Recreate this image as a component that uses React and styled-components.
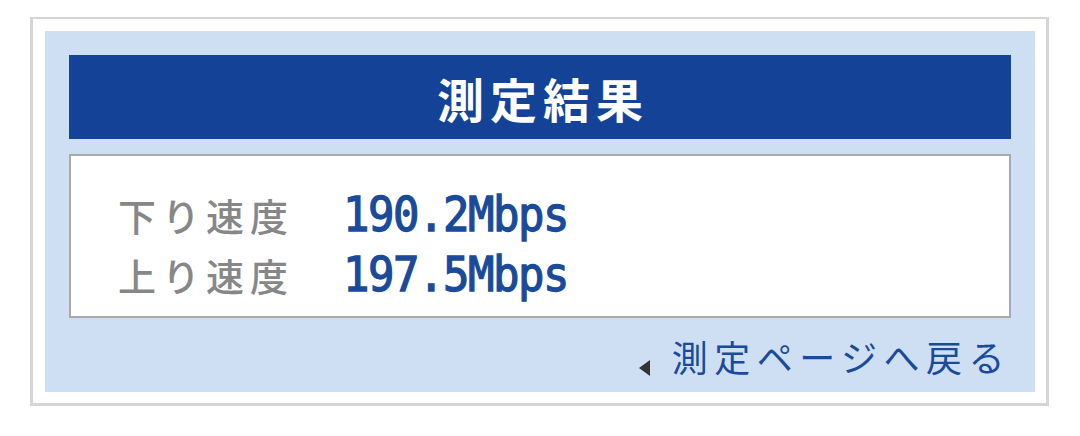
import React from "react";
import styled, { createGlobalStyle } from "styled-components";

const Global = createGlobalStyle`
  html, body { margin: 0; padding: 0; background: #ffffff; }
  body { font-family: "Noto Sans CJK JP", "Noto Sans", sans-serif; }
`;

const Frame = styled.div`
  box-sizing: border-box;
  margin: 17px 0 0 30px;
  width: 1019px;
  height: 389px;
  border: 3px solid #d5d5d5;
  border-top-width: 2px;
  padding: 12px 11px 11px 12px;
  background: #ffffff;
`;

const Panel = styled.div`
  box-sizing: border-box;
  height: 100%;
  background: #cfdff3;
  padding: 24px 24px 0 24px;
  display: flex;
  flex-direction: column;
`;

const Header = styled.div`
  height: 84px;
  background: #134297;
  display: flex;
  align-items: center;
  justify-content: center;
`;

const Title = styled.h1`
  margin: 0;
  color: #ffffff;
  font-family: "Noto Sans CJK JP", sans-serif;
  font-weight: 700;
  font-size: 47px;
  letter-spacing: 6px;
  padding-left: 6px;
  line-height: 1;
`;

const ResultBox = styled.div`
  box-sizing: border-box;
  margin-top: 15px;
  height: 164px;
  background: #ffffff;
  border: 2px solid #aaaaaa;
  padding: 29px 0 0 47px;
  display: grid;
  grid-template-columns: 225px auto;
  grid-auto-rows: 60px;
  align-items: center;
  align-content: start;
`;

const Label = styled.span`
  color: #878787;
  font-family: "Noto Sans CJK JP", sans-serif;
  font-size: 38px;
  font-weight: 500;
  letter-spacing: 6px;
  line-height: 1;
`;

const Value = styled.span`
  color: #1a4a9a;
  font-family: "DejaVu Sans Mono", "Liberation Mono", monospace;
  font-size: 44px;
  font-weight: 400;
  -webkit-text-stroke: 1.2px #1a4a9a;
  letter-spacing: -1.5px;
  line-height: 1;
  transform: scaleY(1.08);
  transform-origin: center;
`;

const Footer = styled.div`
  flex: 1;
  display: flex;
  align-items: center;
  justify-content: flex-end;
  padding-right: 0;
  padding-top: 2px;
`;

const BackLink = styled.a`
  display: flex;
  align-items: center;
  gap: 22px;
  color: #1a4a9a;
  text-decoration: none;
  font-family: "Noto Sans CJK JP", sans-serif;
  font-size: 36px;
  letter-spacing: 6.5px;
  line-height: 1;
`;

const Arrow = styled.span`
  width: 0;
  height: 0;
  border-top: 8px solid transparent;
  border-bottom: 8px solid transparent;
  border-right: 11px solid #333333;
  margin-top: 24px;
`;

const rows = [
  { label: "下り速度", value: "190.2Mbps" },
  { label: "上り速度", value: "197.5Mbps" },
];

export default function App() {
  return (
    <>
      <Global />
      <Frame>
        <Panel>
          <Header>
            <Title>測定結果</Title>
          </Header>
          <ResultBox>
            {rows.map((r) => (
              <React.Fragment key={r.label}>
                <Label>{r.label}</Label>
                <Value>{r.value}</Value>
              </React.Fragment>
            ))}
          </ResultBox>
          <Footer>
            <BackLink href="#">
              <Arrow />
              <span>測定ページへ戻る</span>
            </BackLink>
          </Footer>
        </Panel>
      </Frame>
    </>
  );
}
